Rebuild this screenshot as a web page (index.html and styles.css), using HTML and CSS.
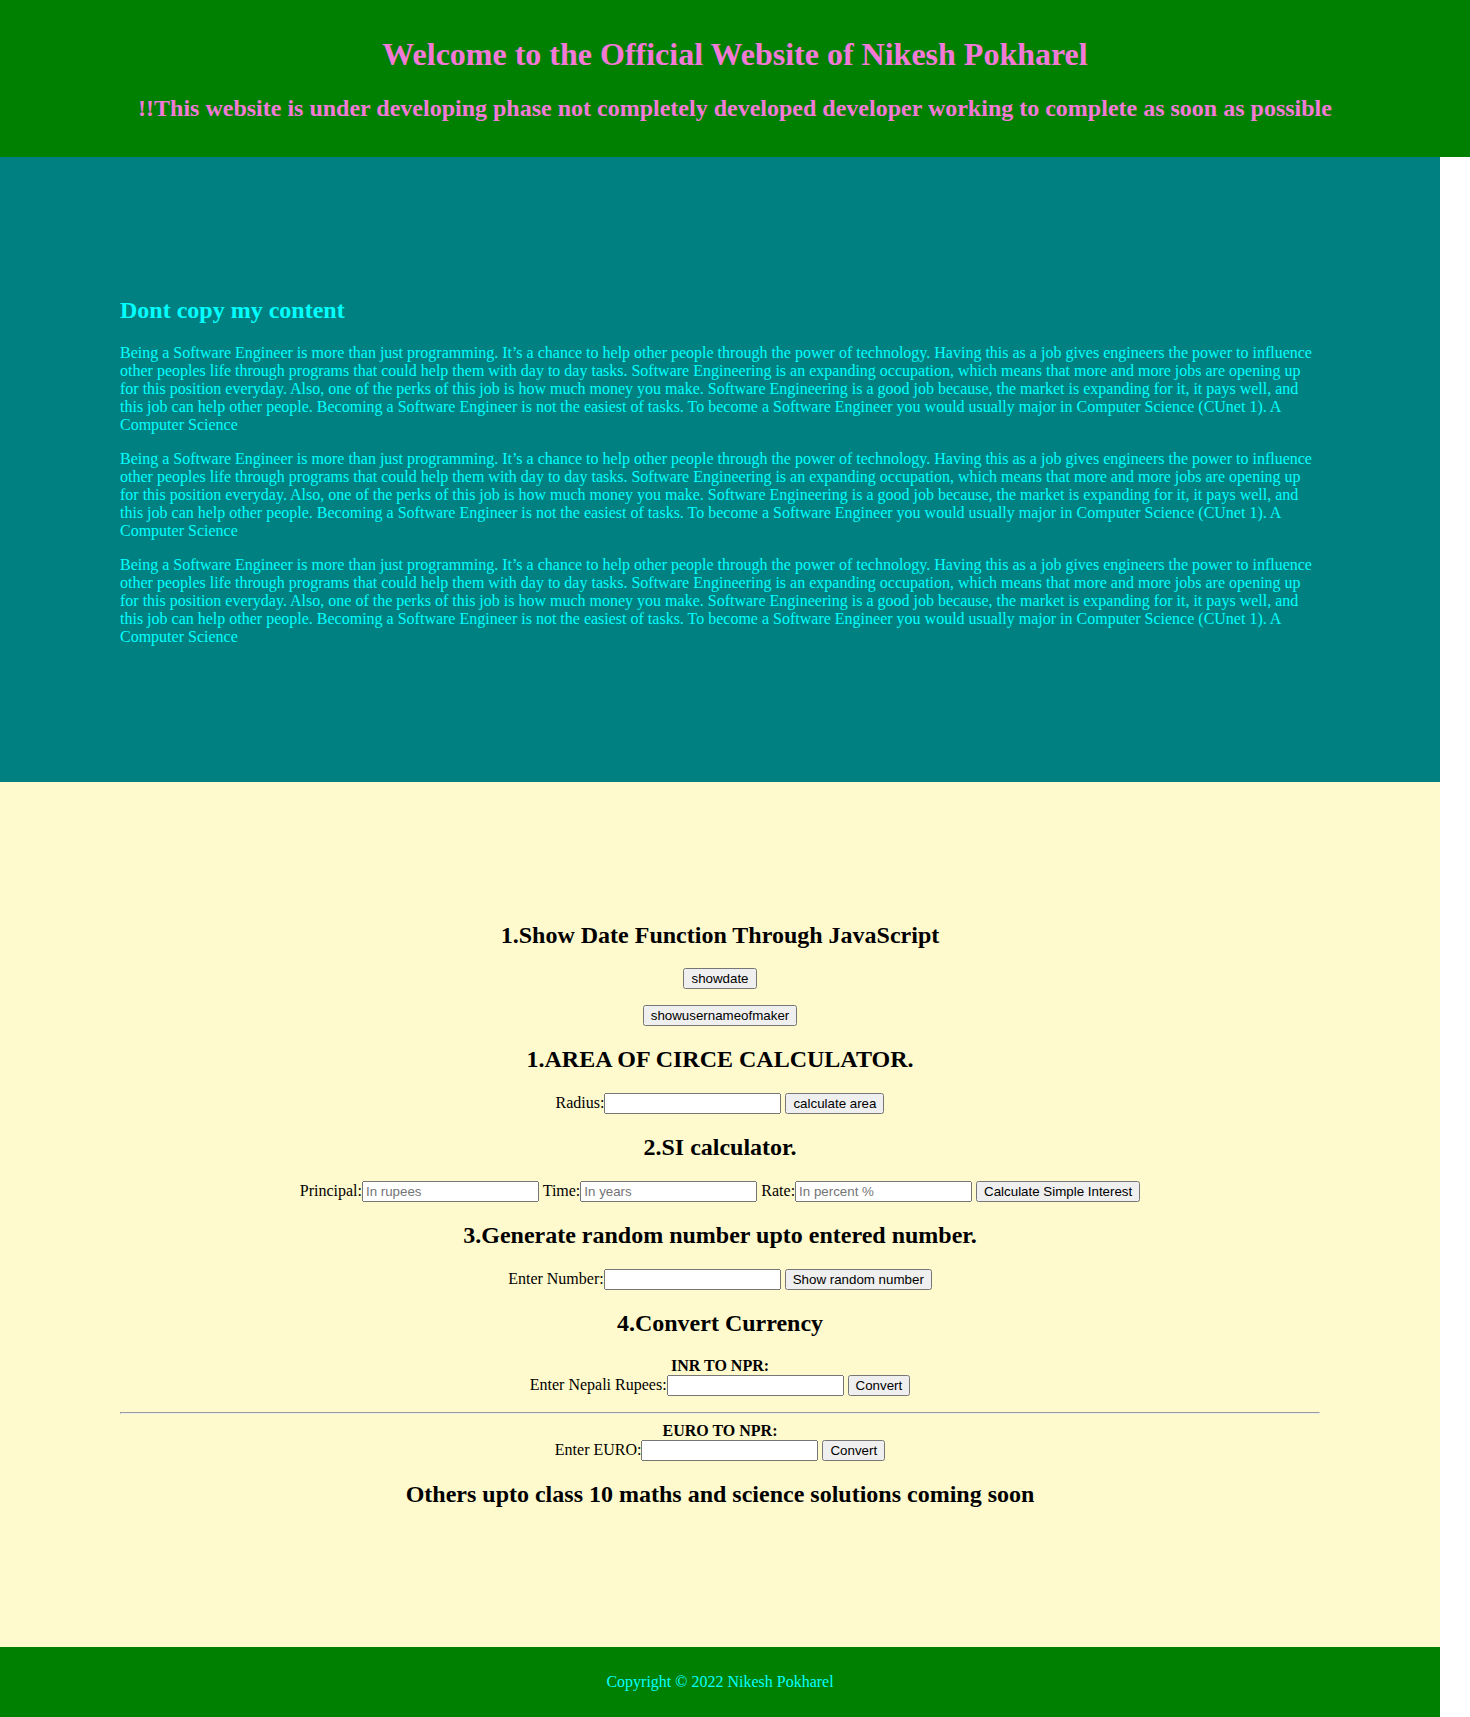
FILE: index.html
```html
<!DOCTYPE html>
<html lang="en">
<head>
<meta charset="utf-8">
<title>Nikesh Pokharel</title>
<link rel="stylesheet" href="styles.css">
</head>
<body>
<header class="site-header">
  <h1 class="title">Welcome to the Official Website of Nikesh Pokharel</h1>
  <h2 class="notice">!!This website is under developing phase not completely developed developer working to complete as soon as possible</h2>
</header>

<section class="content">
  <h2 class="content-title">Dont copy my content</h2>
  <p>Being a Software Engineer is more than just programming. It’s a chance to help other people through the power of technology. Having this as a job gives engineers the power to influence other peoples life through programs that could help them with day to day tasks. Software Engineering is an expanding occupation, which means that more and more jobs are opening up for this position everyday. Also, one of the perks of this job is how much money you make. Software Engineering is a good job because, the market is expanding for it, it pays well, and this job can help other people. Becoming a Software Engineer is not the easiest of tasks. To become a Software Engineer you would usually major in Computer Science (CUnet 1). A Computer Science</p>
  <p>Being a Software Engineer is more than just programming. It’s a chance to help other people through the power of technology. Having this as a job gives engineers the power to influence other peoples life through programs that could help them with day to day tasks. Software Engineering is an expanding occupation, which means that more and more jobs are opening up for this position everyday. Also, one of the perks of this job is how much money you make. Software Engineering is a good job because, the market is expanding for it, it pays well, and this job can help other people. Becoming a Software Engineer is not the easiest of tasks. To become a Software Engineer you would usually major in Computer Science (CUnet 1). A Computer Science</p>
  <p>Being a Software Engineer is more than just programming. It’s a chance to help other people through the power of technology. Having this as a job gives engineers the power to influence other peoples life through programs that could help them with day to day tasks. Software Engineering is an expanding occupation, which means that more and more jobs are opening up for this position everyday. Also, one of the perks of this job is how much money you make. Software Engineering is a good job because, the market is expanding for it, it pays well, and this job can help other people. Becoming a Software Engineer is not the easiest of tasks. To become a Software Engineer you would usually major in Computer Science (CUnet 1). A Computer Science</p>
</section>

<section class="tools">
  <h2>1.Show Date Function Through JavaScript</h2>
  <p class="row"><button type="button">showdate</button></p>
  <p class="row"><button type="button">showusernameofmaker</button></p>

  <h2>1.AREA OF CIRCE CALCULATOR.</h2>
  <p class="row">Radius:<input type="text"> <button type="button">calculate area</button></p>

  <h2>2.SI calculator.</h2>
  <p class="row">Principal:<input type="text" placeholder="In rupees"> Time:<input type="text" placeholder="In years"> Rate:<input type="text" placeholder="In percent %"> <button type="button">Calculate Simple Interest</button></p>

  <h2>3.Generate random number upto entered number.</h2>
  <p class="row">Enter Number:<input type="text"> <button type="button">Show random number</button></p>

  <h2>4.Convert Currency</h2>
  <div class="convert first">
    <b>INR TO NPR:</b><br>
    Enter Nepali Rupees:<input type="text"> <button type="button">Convert</button>
  </div>
  <hr class="divider">
  <div class="convert">
    <b>EURO TO NPR:</b><br>
    Enter EURO:<input type="text"> <button type="button">Convert</button>
  </div>

  <h2>Others upto class 10 maths and science solutions coming soon</h2>
</section>

<footer class="site-footer">
  <p>Copyright © 2022 Nikesh Pokharel</p>
</footer>
</body>
</html>
```

FILE: styles.css
```css
html, body {
  margin: 0;
  padding: 0;
}

body {
  font-family: "Liberation Serif", "Times New Roman", serif;
  font-size: 16px;
  background: #ffffff;
}

.site-header {
  background: #008000;
  color: #f27ad6;
  text-align: center;
  padding: 15px 0;
}

.site-header .title {
  font-size: 32px;
  margin: 21.44px 0;
}

.site-header .notice {
  font-size: 24px;
  margin: 19.92px 0;
}

.content {
  width: 1440px;
  box-sizing: border-box;
  background: #008080;
  color: #00ffff;
  padding: 120px;
}

.content-title {
  font-size: 24px;
  margin: 19.92px 0;
}

.content p {
  margin: 16px 0;
}

.tools {
  width: 1440px;
  box-sizing: border-box;
  background: #fffacd;
  color: #000000;
  text-align: center;
  padding: 120px;
}

.tools h2 {
  font-size: 24px;
  margin: 19.92px 0;
}

.tools .row {
  margin: 16px 0;
}

.tools input {
  box-sizing: border-box;
  width: 177px;
}

.convert {
  margin: 0;
}

.convert.first {
  margin-bottom: 16px;
}

.divider {
  margin: 8px 0;
}

.site-footer {
  width: 1440px;
  box-sizing: border-box;
  background: #008000;
  color: #00ffff;
  text-align: center;
  padding: 10px 0;
}

.site-footer p {
  margin: 16px 0;
}
```
